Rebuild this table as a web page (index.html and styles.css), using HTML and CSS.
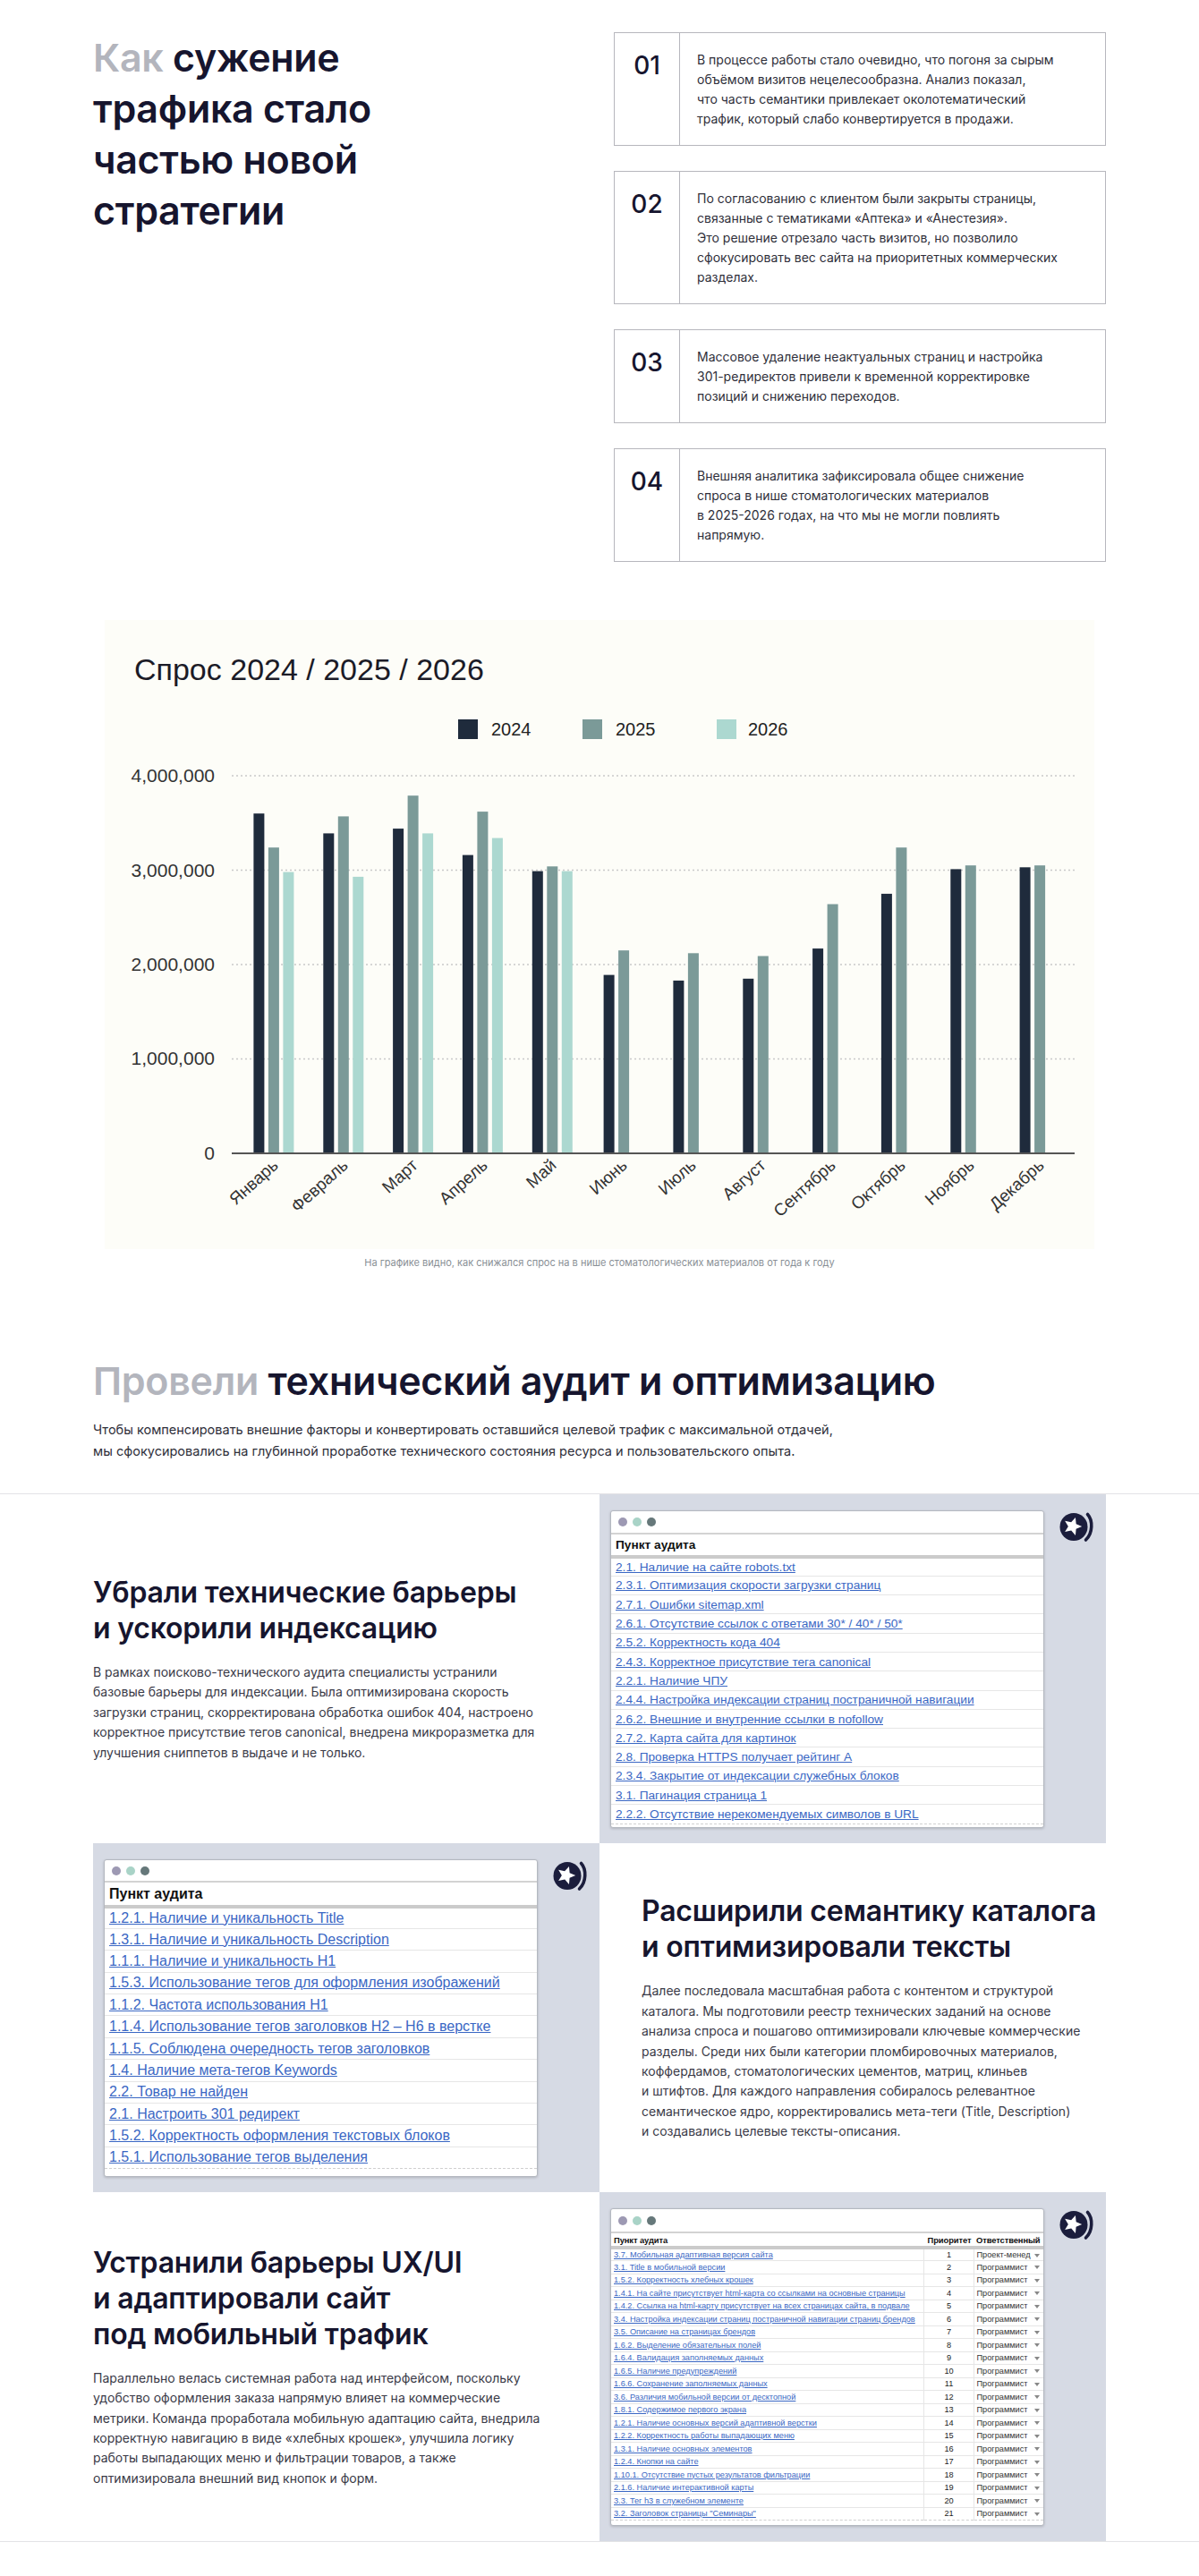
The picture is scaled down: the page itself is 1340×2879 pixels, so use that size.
FILE: index.html
```html
<!DOCTYPE html>
<html lang="ru">
<head>
<meta charset="utf-8">
<title>Сужение трафика</title>
<link rel="stylesheet" href="styles.css">
</head>
<body>
<section class="intro">
  <h1 class="intro-title"><span class="muted">Как</span> сужение<br>трафика стало<br>частью новой<br>стратегии</h1>
  <div class="cards">
    <div class="card">
      <div class="card-num">01</div>
      <p class="card-text">В процессе работы стало очевидно, что погоня за сырым<br>объёмом визитов нецелесообразна. Анализ показал,<br>что часть семантики привлекает околотематический<br>трафик, который слабо конвертируется в продажи.</p>
    </div>
    <div class="card">
      <div class="card-num">02</div>
      <p class="card-text">По согласованию с клиентом были закрыты страницы,<br>связанные с тематиками «Аптека» и «Анестезия».<br>Это решение отрезало часть визитов, но позволило<br>сфокусировать вес сайта на приоритетных коммерческих<br>разделах.</p>
    </div>
    <div class="card">
      <div class="card-num">03</div>
      <p class="card-text">Массовое удаление неактуальных страниц и настройка<br>301-редиректов привели к временной корректировке<br>позиций и снижению переходов.</p>
    </div>
    <div class="card">
      <div class="card-num">04</div>
      <p class="card-text">Внешняя аналитика зафиксировала общее снижение<br>спроса в нише стоматологических материалов<br>в 2025-2026 годах, на что мы не могли повлиять<br>напрямую.</p>
    </div>
  </div>
</section>

<section class="chart-section">
  <div class="chart-box">
    <svg class="chart" width="1106" height="703" viewBox="0 0 1106 703">
      <text x="33" y="67" class="c-title">Спрос 2024 / 2025 / 2026</text>
      <rect x="395" y="111" width="22" height="22" class="c24"/>
      <text x="432" y="129" class="c-legend">2024</text>
      <rect x="534" y="111" width="22" height="22" class="c25"/>
      <text x="571" y="129" class="c-legend">2025</text>
      <rect x="684" y="111" width="22" height="22" class="c26"/>
      <text x="719" y="129" class="c-legend">2026</text>

      <line x1="142" y1="174" x2="1084" y2="174" class="grid"/>
      <line x1="142" y1="279.5" x2="1084" y2="279.5" class="grid"/>
      <line x1="142" y1="385" x2="1084" y2="385" class="grid"/>
      <line x1="142" y1="490.5" x2="1084" y2="490.5" class="grid"/>

      <text x="123" y="181" class="c-axis" text-anchor="end">4,000,000</text>
      <text x="123" y="287" class="c-axis" text-anchor="end">3,000,000</text>
      <text x="123" y="392" class="c-axis" text-anchor="end">2,000,000</text>
      <text x="123" y="497" class="c-axis" text-anchor="end">1,000,000</text>
      <text x="123" y="603" class="c-axis" text-anchor="end">0</text>

      <rect x="166.4" y="216.2" width="12" height="379.8" class="c24"/>
      <rect x="182.9" y="254.2" width="12" height="341.8" class="c25"/>
      <rect x="199.4" y="281.6" width="12" height="314.4" class="c26"/>

      <rect x="244.3" y="238.4" width="12" height="357.6" class="c24"/>
      <rect x="260.8" y="219.4" width="12" height="376.6" class="c25"/>
      <rect x="277.3" y="286.9" width="12" height="309.1" class="c26"/>

      <rect x="322.1" y="233.1" width="12" height="362.9" class="c24"/>
      <rect x="338.6" y="196.2" width="12" height="399.8" class="c25"/>
      <rect x="355.1" y="238.4" width="12" height="357.6" class="c26"/>

      <rect x="399.9" y="262.6" width="12" height="333.4" class="c24"/>
      <rect x="416.4" y="214.1" width="12" height="381.9" class="c25"/>
      <rect x="432.9" y="243.6" width="12" height="352.4" class="c26"/>

      <rect x="477.8" y="280.6" width="12" height="315.4" class="c24"/>
      <rect x="494.3" y="275.3" width="12" height="320.7" class="c25"/>
      <rect x="510.8" y="280.6" width="12" height="315.4" class="c26"/>

      <rect x="557.6" y="396.6" width="12" height="199.4" class="c24"/>
      <rect x="574.1" y="369.2" width="12" height="226.8" class="c25"/>

      <rect x="635.4" y="402.9" width="12" height="193.1" class="c24"/>
      <rect x="651.9" y="372.3" width="12" height="223.7" class="c25"/>

      <rect x="713.3" y="400.8" width="12" height="195.2" class="c24"/>
      <rect x="729.8" y="375.5" width="12" height="220.5" class="c25"/>

      <rect x="791.1" y="367.1" width="12" height="228.9" class="c24"/>
      <rect x="807.6" y="317.5" width="12" height="278.5" class="c25"/>

      <rect x="867.9" y="305.9" width="12" height="290.1" class="c24"/>
      <rect x="884.4" y="254.2" width="12" height="341.8" class="c25"/>

      <rect x="945.3" y="278.4" width="12" height="317.6" class="c24"/>
      <rect x="961.8" y="274.2" width="12" height="321.8" class="c25"/>

      <rect x="1022.6" y="276.3" width="12" height="319.7" class="c24"/>
      <rect x="1039.1" y="274.2" width="12" height="321.8" class="c25"/>

      <line x1="142" y1="596" x2="1084" y2="596" class="zero"/>

      <text class="c-month" text-anchor="end" transform="translate(195,611) rotate(-42)">Январь</text>
      <text class="c-month" text-anchor="end" transform="translate(273,611) rotate(-42)">Февраль</text>
      <text class="c-month" text-anchor="end" transform="translate(351,611) rotate(-42)">Март</text>
      <text class="c-month" text-anchor="end" transform="translate(429,611) rotate(-42)">Апрель</text>
      <text class="c-month" text-anchor="end" transform="translate(506,611) rotate(-42)">Май</text>
      <text class="c-month" text-anchor="end" transform="translate(585,611) rotate(-42)">Июнь</text>
      <text class="c-month" text-anchor="end" transform="translate(662,611) rotate(-42)">Июль</text>
      <text class="c-month" text-anchor="end" transform="translate(740,611) rotate(-42)">Август</text>
      <text class="c-month" text-anchor="end" transform="translate(818,611) rotate(-42)">Сентябрь</text>
      <text class="c-month" text-anchor="end" transform="translate(896,611) rotate(-42)">Октябрь</text>
      <text class="c-month" text-anchor="end" transform="translate(973,611) rotate(-42)">Ноябрь</text>
      <text class="c-month" text-anchor="end" transform="translate(1051,611) rotate(-42)">Декабрь</text>
    </svg>
  </div>
  <p class="chart-caption">На графике видно, как снижался спрос на в нише стоматологических материалов от года к году</p>
</section>

<section class="audit">
  <h2 class="audit-title"><span class="muted">Провели</span> технический аудит и оптимизацию</h2>
  <p class="audit-lead">Чтобы компенсировать внешние факторы и конвертировать оставшийся целевой трафик с максимальной отдачей,<br>мы сфокусировались на глубинной проработке технического состояния ресурса и пользовательского опыта.</p>
</section>

<div class="features">
  <div class="feature">
    <div class="feature-text">
      <h3 class="feature-title">Убрали технические барьеры<br>и ускорили индексацию</h3>
      <p class="feature-desc">В рамках поисково-технического аудита специалисты устранили<br>базовые барьеры для индексации. Была оптимизирована скорость<br>загрузки страниц, скорректирована обработка ошибок 404, настроено<br>корректное присутствие тегов canonical, внедрена микроразметка для<br>улучшения сниппетов в выдаче и не только.</p>
    </div>
    <div class="panel">
      <div class="win win-md">
        <div class="win-bar"><span class="dot d1"></span><span class="dot d2"></span><span class="dot d3"></span></div>
        <table class="audit-table">
          <thead><tr><th>Пункт аудита</th></tr></thead>
          <tbody>
            <tr><td><a>2.1. Наличие на сайте robots.txt</a></td></tr>
            <tr><td><a>2.3.1. Оптимизация скорости загрузки страниц</a></td></tr>
            <tr><td><a>2.7.1. Ошибки sitemap.xml</a></td></tr>
            <tr><td><a>2.6.1. Отсутствие ссылок с ответами 30* / 40* / 50*</a></td></tr>
            <tr><td><a>2.5.2. Корректность кода 404</a></td></tr>
            <tr><td><a>2.4.3. Корректное присутствие тега canonical</a></td></tr>
            <tr><td><a>2.2.1. Наличие ЧПУ</a></td></tr>
            <tr><td><a>2.4.4. Настройка индексации страниц постраничной навигации</a></td></tr>
            <tr><td><a>2.6.2. Внешние и внутренние ссылки в nofollow</a></td></tr>
            <tr><td><a>2.7.2. Карта сайта для картинок</a></td></tr>
            <tr><td><a>2.8. Проверка HTTPS получает рейтинг A</a></td></tr>
            <tr><td><a>2.3.4. Закрытие от индексации служебных блоков</a></td></tr>
            <tr><td><a>3.1. Пагинация страница 1</a></td></tr>
            <tr class="last"><td><a>2.2.2. Отсутствие нерекомендуемых символов в URL</a></td></tr>
          </tbody>
        </table>
      </div>
      <svg class="logo" width="38" height="37" viewBox="0 0 38 37"><circle cx="16" cy="18.5" r="15.5" fill="#1b1d3c"/><path d="M15 7.5l2.9 6.6 7.1.7-5.4 4.7 1.6 7-6.2-3.7-6.2 3.7 1.6-7-5.4-4.7 7.1-.7z" fill="#fff" transform="rotate(18 15 17)"/><path d="M31.5 4.5C37.5 11 37.5 25.5 29.5 33" stroke="#1b1d3c" stroke-width="3.6" fill="none" stroke-linecap="round"/></svg>
    </div>
  </div>

  <div class="feature">
    <div class="panel">
      <div class="win win-lg">
        <div class="win-bar"><span class="dot d1"></span><span class="dot d2"></span><span class="dot d3"></span></div>
        <table class="audit-table">
          <thead><tr><th>Пункт аудита</th></tr></thead>
          <tbody>
            <tr><td><a>1.2.1. Наличие и уникальность Title</a></td></tr>
            <tr><td><a>1.3.1. Наличие и уникальность Description</a></td></tr>
            <tr><td><a>1.1.1. Наличие и уникальность H1</a></td></tr>
            <tr><td><a>1.5.3. Использование тегов для оформления изображений</a></td></tr>
            <tr><td><a>1.1.2. Частота использования H1</a></td></tr>
            <tr><td><a>1.1.4. Использование тегов заголовков H2 – H6 в верстке</a></td></tr>
            <tr><td><a>1.1.5. Соблюдена очередность тегов заголовков</a></td></tr>
            <tr><td><a>1.4. Наличие мета-тегов Keywords</a></td></tr>
            <tr><td><a>2.2. Товар не найден</a></td></tr>
            <tr><td><a>2.1. Настроить 301 редирект</a></td></tr>
            <tr><td><a>1.5.2. Корректность оформления текстовых блоков</a></td></tr>
            <tr class="last"><td><a>1.5.1. Использование тегов выделения</a></td></tr>
          </tbody>
        </table>
      </div>
      <svg class="logo" width="38" height="37" viewBox="0 0 38 37"><circle cx="16" cy="18.5" r="15.5" fill="#1b1d3c"/><path d="M15 7.5l2.9 6.6 7.1.7-5.4 4.7 1.6 7-6.2-3.7-6.2 3.7 1.6-7-5.4-4.7 7.1-.7z" fill="#fff" transform="rotate(18 15 17)"/><path d="M31.5 4.5C37.5 11 37.5 25.5 29.5 33" stroke="#1b1d3c" stroke-width="3.6" fill="none" stroke-linecap="round"/></svg>
    </div>
    <div class="feature-text feature-text-right">
      <h3 class="feature-title">Расширили семантику каталога<br>и оптимизировали тексты</h3>
      <p class="feature-desc">Далее последовала масштабная работа с контентом и структурой<br>каталога. Мы подготовили реестр технических заданий на основе<br>анализа спроса и пошагово оптимизировали ключевые коммерческие<br>разделы. Среди них были категории пломбировочных материалов,<br>коффердамов, стоматологических цементов, матриц, клиньев<br>и штифтов. Для каждого направления собиралось релевантное<br>семантическое ядро, корректировались мета-теги (Title, Description)<br>и создавались целевые тексты-описания.</p>
    </div>
  </div>

  <div class="feature">
    <div class="feature-text">
      <h3 class="feature-title">Устранили барьеры UX/UI<br>и адаптировали сайт<br>под мобильный трафик</h3>
      <p class="feature-desc">Параллельно велась системная работа над интерфейсом, поскольку<br>удобство оформления заказа напрямую влияет на коммерческие<br>метрики. Команда проработала мобильную адаптацию сайта, внедрила<br>корректную навигацию в виде «хлебных крошек», улучшила логику<br>работы выпадающих меню и фильтрации товаров, а также<br>оптимизировала внешний вид кнопок и форм.</p>
    </div>
    <div class="panel">
      <div class="win win-sm">
        <div class="win-bar"><span class="dot d1"></span><span class="dot d2"></span><span class="dot d3"></span></div>
        <table class="audit-table grid-table">
          <colgroup><col class="col-main"><col class="col-prio"><col class="col-resp"></colgroup>
          <thead><tr><th>Пункт аудита</th><th class="th-c">Приоритет</th><th>Ответственный</th></tr></thead>
          <tbody>
            <tr><td><a>3.7. Мобильная адаптивная версия сайта</a></td><td class="num">1</td><td class="resp"><span>Проект-менед</span><i class="caret"></i></td></tr>
            <tr><td><a>3.1. Title в мобильной версии</a></td><td class="num">2</td><td class="resp"><span>Программист</span><i class="caret"></i></td></tr>
            <tr><td><a>1.5.2. Корректность хлебных крошек</a></td><td class="num">3</td><td class="resp"><span>Программист</span><i class="caret"></i></td></tr>
            <tr><td><a>1.4.1. На сайте присутствует html-карта со ссылками на основные страницы</a></td><td class="num">4</td><td class="resp"><span>Программист</span><i class="caret"></i></td></tr>
            <tr><td><a>1.4.2. Ссылка на html-карту присутствует на всех страницах сайта, в подвале</a></td><td class="num">5</td><td class="resp"><span>Программист</span><i class="caret"></i></td></tr>
            <tr><td><a>3.4. Настройка индексации страниц постраничной навигации страниц брендов</a></td><td class="num">6</td><td class="resp"><span>Программист</span><i class="caret"></i></td></tr>
            <tr><td><a>3.5. Описание на страницах брендов</a></td><td class="num">7</td><td class="resp"><span>Программист</span><i class="caret"></i></td></tr>
            <tr><td><a>1.6.2. Выделение обязательных полей</a></td><td class="num">8</td><td class="resp"><span>Программист</span><i class="caret"></i></td></tr>
            <tr><td><a>1.6.4. Валидация заполняемых данных</a></td><td class="num">9</td><td class="resp"><span>Программист</span><i class="caret"></i></td></tr>
            <tr><td><a>1.6.5. Наличие предупреждений</a></td><td class="num">10</td><td class="resp"><span>Программист</span><i class="caret"></i></td></tr>
            <tr><td><a>1.6.6. Сохранение заполняемых данных</a></td><td class="num">11</td><td class="resp"><span>Программист</span><i class="caret"></i></td></tr>
            <tr><td><a>3.6. Различия мобильной версии от десктопной</a></td><td class="num">12</td><td class="resp"><span>Программист</span><i class="caret"></i></td></tr>
            <tr><td><a>1.8.1. Содержимое первого экрана</a></td><td class="num">13</td><td class="resp"><span>Программист</span><i class="caret"></i></td></tr>
            <tr><td><a>1.2.1. Наличие основных версий адаптивной верстки</a></td><td class="num">14</td><td class="resp"><span>Программист</span><i class="caret"></i></td></tr>
            <tr><td><a>1.2.2. Корректность работы выпадающих меню</a></td><td class="num">15</td><td class="resp"><span>Программист</span><i class="caret"></i></td></tr>
            <tr><td><a>1.3.1. Наличие основных элементов</a></td><td class="num">16</td><td class="resp"><span>Программист</span><i class="caret"></i></td></tr>
            <tr><td><a>1.2.4. Кнопки на сайте</a></td><td class="num">17</td><td class="resp"><span>Программист</span><i class="caret"></i></td></tr>
            <tr><td><a>1.10.1. Отсутствие пустых результатов фильтрации</a></td><td class="num">18</td><td class="resp"><span>Программист</span><i class="caret"></i></td></tr>
            <tr><td><a>2.1.6. Наличие интерактивной карты</a></td><td class="num">19</td><td class="resp"><span>Программист</span><i class="caret"></i></td></tr>
            <tr><td><a>3.3. Тег h3 в служебном элементе</a></td><td class="num">20</td><td class="resp"><span>Программист</span><i class="caret"></i></td></tr>
            <tr class="last"><td><a>3.2. Заголовок страницы "Семинары"</a></td><td class="num">21</td><td class="resp"><span>Программист</span><i class="caret"></i></td></tr>
          </tbody>
        </table>
      </div>
      <svg class="logo" width="38" height="37" viewBox="0 0 38 37"><circle cx="16" cy="18.5" r="15.5" fill="#1b1d3c"/><path d="M15 7.5l2.9 6.6 7.1.7-5.4 4.7 1.6 7-6.2-3.7-6.2 3.7 1.6-7-5.4-4.7 7.1-.7z" fill="#fff" transform="rotate(18 15 17)"/><path d="M31.5 4.5C37.5 11 37.5 25.5 29.5 33" stroke="#1b1d3c" stroke-width="3.6" fill="none" stroke-linecap="round"/></svg>
    </div>
  </div>
</div>
</body>
</html>
```

FILE: styles.css
```css
* { box-sizing: border-box; }

html, body {
  margin: 0;
  padding: 0;
  background: #ffffff;
}

body {
  font-family: Inter, "Noto Sans", "DejaVu Sans", sans-serif;
  color: #16152e;
  height: 2879px;
}

.muted { color: #b3b5bd; }

/* ---------- intro ---------- */
.intro {
  width: 1132px;
  margin: 0 auto;
  padding-top: 36px;
  display: grid;
  grid-template-columns: 1fr 550px;
}

.intro-title {
  margin: 0;
  font-size: 43px;
  line-height: 57px;
  font-weight: 600;
  letter-spacing: -0.3px;
  color: #16152e;
}

.cards {
  display: flex;
  flex-direction: column;
  gap: 28px;
}

.card {
  display: flex;
  border: 1px solid #b7b7bd;
}

.card-num {
  width: 73px;
  flex: none;
  border-right: 1px solid #b7b7bd;
  padding-top: 19px;
  text-align: center;
  font-size: 28px;
  line-height: 34px;
  font-weight: 500;
  color: #16152e;
}

.card-text {
  margin: 0;
  padding: 19px 20px 18px 19px;
  font-size: 14px;
  line-height: 22px;
  color: #2f2f3a;
  white-space: nowrap;
}

/* ---------- chart ---------- */
.chart-section {
  margin-top: 65px;
}

.chart-box {
  width: 1106px;
  height: 703px;
  margin: 0 auto;
  background: #fdfdf8;
}

.chart { display: block; }

.chart text { font-family: "Liberation Sans", Arial, sans-serif; }

.c-title { font-size: 34px; fill: #1b1b27; }
.c-legend { font-size: 20px; fill: #222; }
.c-axis { font-size: 21px; fill: #333; }
.c-month { font-size: 19px; fill: #333; }

.c24 { fill: #1f2b3c; }
.c25 { fill: #7b9a98; }
.c26 { fill: #acd8d0; }

.grid { stroke: #c9c9c9; stroke-width: 1.5; stroke-dasharray: 2 3; }
.zero { stroke: #555; stroke-width: 2; }

.chart-caption {
  margin: 8px 0 0;
  text-align: center;
  font-size: 11px;
  line-height: 14px;
  color: #8a9096;
}

/* ---------- audit ---------- */
.audit {
  width: 1132px;
  margin: 99px auto 0;
}

.audit-title {
  margin: 0;
  font-size: 43px;
  line-height: 52px;
  font-weight: 600;
  letter-spacing: -0.3px;
  color: #16152e;
}

.audit-lead {
  margin: 17px 0 0;
  font-size: 14.5px;
  line-height: 24px;
  color: #2f2f3a;
  white-space: nowrap;
}

.features {
  margin-top: 35px;
  border-top: 1px solid #e3e3e6;
  border-bottom: 1px solid #e3e3e6;
}

.feature {
  width: 1132px;
  height: 390px;
  margin: 0 auto;
  display: grid;
  grid-template-columns: 566px 566px;
}

.feature-text {
  display: flex;
  flex-direction: column;
  justify-content: center;
}

.feature-text-right { padding-left: 47px; }

.feature-title {
  margin: 0;
  font-size: 32px;
  line-height: 40px;
  font-weight: 600;
  letter-spacing: -0.2px;
  color: #16152e;
}

.feature-desc {
  margin: 18px 0 0;
  font-size: 14px;
  line-height: 22.4px;
  color: #3a3a47;
  white-space: nowrap;
}

.panel {
  background: #d6dae4;
  display: flex;
  justify-content: space-between;
  align-items: flex-start;
  padding: 18px 14px 17px 12px;
}

.logo { flex: none; display: block; }

/* ---------- window ---------- */
.win {
  width: 485px;
  height: 355px;
  background: #ffffff;
  border: 1px solid #b4b8c0;
  border-radius: 3px;
  box-shadow: 0 1px 3px rgba(0, 0, 0, 0.18);
  overflow: hidden;
  font-family: "Liberation Sans", Arial, sans-serif;
}

.win-bar {
  height: 26px;
  border-bottom: 2px solid #d3d3d3;
  display: flex;
  align-items: center;
  gap: 6px;
  padding-left: 8px;
}

.dot {
  width: 10px;
  height: 10px;
  border-radius: 50%;
}
.d1 { background: #9d99b3; }
.d2 { background: #a9d3c7; }
.d3 { background: #66787a; }

.audit-table {
  width: 100%;
  border-collapse: collapse;
  table-layout: fixed;
}

.audit-table th {
  text-align: left;
  font-weight: bold;
  color: #111;
  padding: 0 5px;
  border-bottom: 4px solid #cbcbcb;
  white-space: nowrap;
  overflow: hidden;
}

.audit-table td {
  padding: 0 5px;
  border-bottom: 1px solid #e6e6e6;
  white-space: nowrap;
  overflow: hidden;
}

.audit-table tr.last td { border-bottom: 1px dashed #d0d0d0; }

.audit-table a {
  color: #3a67c4;
  text-decoration: underline;
}

.win-md { font-size: 13.7px; }
.win-md th { height: 25px; }
.win-md td { height: 21.3px; }

.win-lg { font-size: 16px; }
.win-lg .win-bar { height: 25px; }
.win-lg th { height: 27px; }
.win-lg td { height: 24.4px; }

.win-sm { font-size: 9.2px; }
.win-sm .win-bar { height: 27px; }
.win-sm th { height: 16px; font-size: 9.4px; padding: 0 1px 0 3px; letter-spacing: -0.1px; }
.win-sm td { height: 14.5px; padding: 0 2px 0 3px; }

.col-main { width: 349px; }
.col-prio { width: 56px; }
.col-resp { width: auto; }

.grid-table td + td { border-left: 1px solid #e6e6e6; }

.th-c { text-align: center !important; }

.num { text-align: center; color: #222; }

.resp {
  color: #333;
  position: relative;
}

.caret {
  position: absolute;
  right: 4px;
  top: 5px;
  width: 0;
  height: 0;
  border-left: 3px solid transparent;
  border-right: 3px solid transparent;
  border-top: 4px solid #888;
}
```
